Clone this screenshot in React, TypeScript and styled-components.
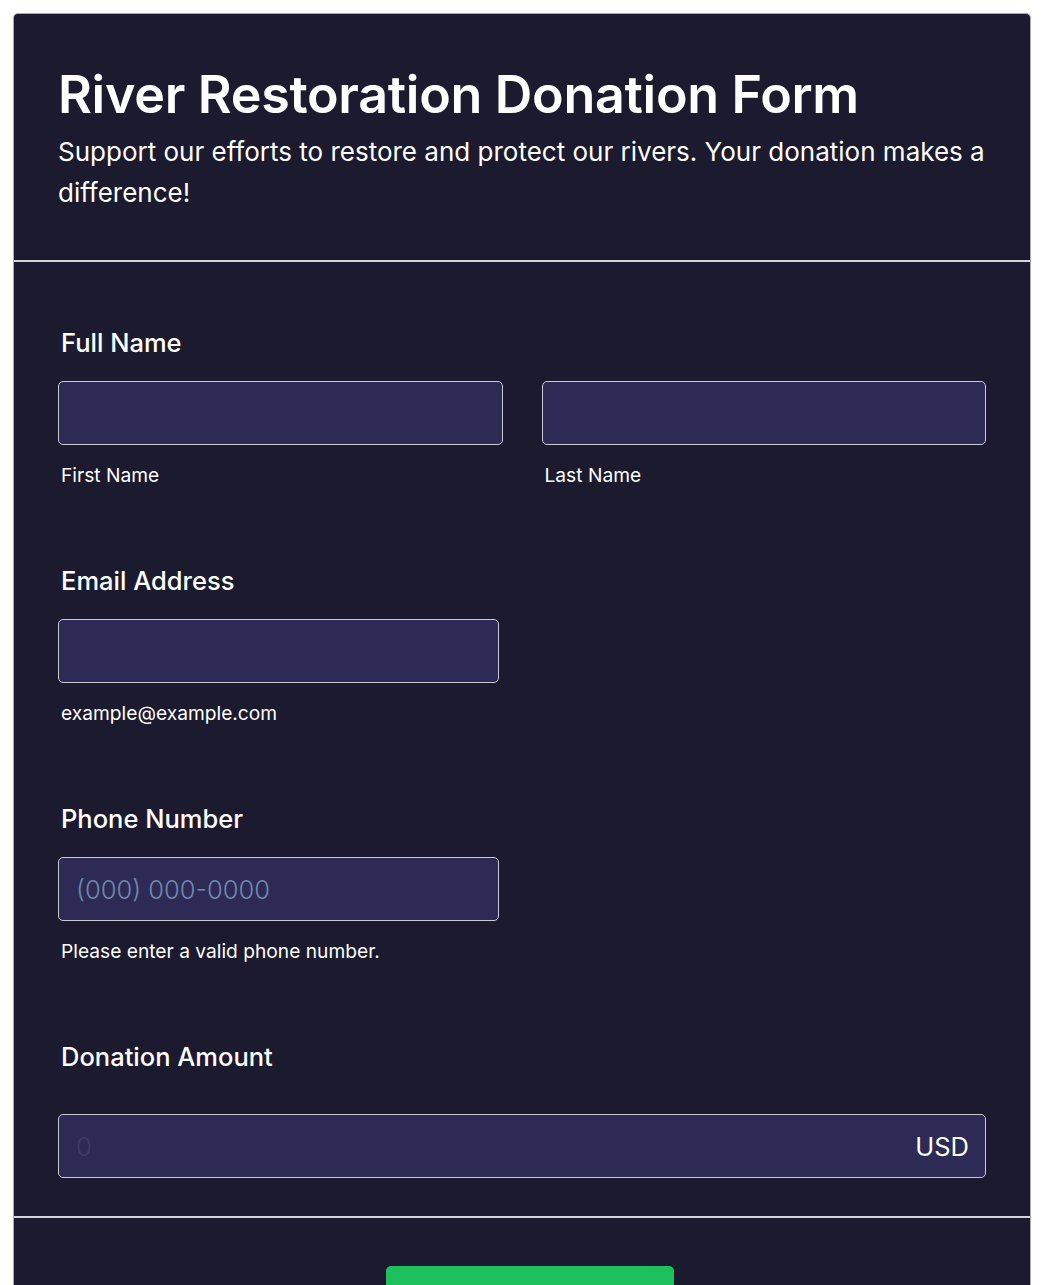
import React from 'react'
import styled, { createGlobalStyle } from 'styled-components'

const GlobalStyle = createGlobalStyle`
  body {
    margin: 0;
    background: #ffffff;
    font-family: Inter, "Noto Sans", sans-serif;
  }
`

const Page = styled.div`
  padding: 13px 13px 0;
`

const Card = styled.div`
  background: #1b1a2e;
  border: 1px solid #a9a9b4;
  border-bottom: none;
  border-radius: 5px 5px 0 0;
  color: #ffffff;
  overflow: hidden;
`

const Header = styled.header`
  padding: 51px 44px 47px;
  border-bottom: 2px solid #d4d4dc;
`

const Title = styled.h1`
  margin: 0;
  font-size: 52px;
  line-height: 60px;
  font-weight: 600;
  letter-spacing: -0.3px;
`

const Subtitle = styled.p`
  margin: 6px 0 0;
  font-size: 26px;
  line-height: 41px;
  font-weight: 400;
`

const Form = styled.form`
  padding: 67px 44px 38px;
  display: flex;
  flex-direction: column;
  gap: 81px;
  border-bottom: 2px solid #d4d4dc;
`

const Field = styled.div<{ $half?: boolean }>`
  display: flex;
  flex-direction: column;
  width: ${({ $half }) => ($half ? '441px' : '100%')};
`

const Label = styled.label<{ $gap?: number }>`
  padding-left: 3px;
  font-size: 25.5px;
  line-height: 28px;
  font-weight: 500;
  margin-bottom: ${({ $gap }) => $gap ?? 24}px;
`

const Row = styled.div`
  display: grid;
  grid-template-columns: 1fr 1fr;
  column-gap: 39px;
`

const Sub = styled.div`
  display: flex;
  flex-direction: column;
`

const InputBox = styled.div`
  display: flex;
  align-items: center;
  height: 64px;
  box-sizing: border-box;
  background: #2d2b55;
  border: 1.5px solid #cacad3;
  border-radius: 5px;
  padding: 0 16px 0 17px;
`

const Input = styled.input<{ $dimHint?: boolean }>`
  flex: 1;
  min-width: 0;
  background: transparent;
  border: none;
  outline: none;
  color: #ffffff;
  font-family: Inter, "Noto Sans", sans-serif;
  font-size: 25.5px;
  font-weight: 300;
  padding: 0;

  &::placeholder {
    color: ${({ $dimHint }) => ($dimHint ? '#3e3d63' : '#7088ac')};
  }
`

const Suffix = styled.span`
  font-size: 25.5px;
  font-weight: 400;
  color: #ffffff;
`

const Hint = styled.span`
  padding-left: 3px;
  margin-top: 19px;
  font-size: 19.2px;
  line-height: 22px;
  font-weight: 400;
`

const Footer = styled.div`
  display: flex;
  justify-content: center;
  padding: 48px 0 0 16px;
`

const SubmitButton = styled.button`
  width: 288px;
  height: 60px;
  border: none;
  border-radius: 5px;
  background: #1cc15c;
  color: #ffffff;
  font-family: Inter, "Noto Sans", sans-serif;
  font-size: 24px;
  font-weight: 600;
`

export default function App() {
  return (
    <>
      <GlobalStyle />
      <Page>
        <Card>
          <Header>
            <Title>River Restoration Donation Form</Title>
            <Subtitle>
              Support our efforts to restore and protect our rivers. Your donation makes a
              difference!
            </Subtitle>
          </Header>
          <Form onSubmit={(e) => e.preventDefault()}>
            <Field>
              <Label>Full Name</Label>
              <Row>
                <Sub>
                  <InputBox>
                    <Input type="text" aria-label="First Name" />
                  </InputBox>
                  <Hint>First Name</Hint>
                </Sub>
                <Sub>
                  <InputBox>
                    <Input type="text" aria-label="Last Name" />
                  </InputBox>
                  <Hint>Last Name</Hint>
                </Sub>
              </Row>
            </Field>
            <Field $half>
              <Label>Email Address</Label>
              <InputBox>
                <Input type="email" />
              </InputBox>
              <Hint>example@example.com</Hint>
            </Field>
            <Field $half>
              <Label>Phone Number</Label>
              <InputBox>
                <Input type="tel" placeholder="(000) 000-0000" />
              </InputBox>
              <Hint>Please enter a valid phone number.</Hint>
            </Field>
            <Field>
              <Label $gap={43}>Donation Amount</Label>
              <InputBox>
                <Input type="text" placeholder="0" $dimHint />
                <Suffix>USD</Suffix>
              </InputBox>
            </Field>
          </Form>
          <Footer>
            <SubmitButton type="submit">Donate</SubmitButton>
          </Footer>
        </Card>
      </Page>
    </>
  )
}
